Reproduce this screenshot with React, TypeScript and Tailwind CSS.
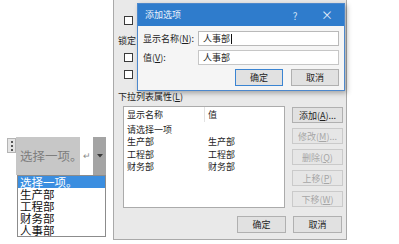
import React from "react";

const U = ({ children }: { children: React.ReactNode }) => (
  <span className="underline">{children}</span>
);

const Btn = ({
  children,
  disabled = false,
  primary = false,
  className = "",
}: {
  children: React.ReactNode;
  disabled?: boolean;
  primary?: boolean;
  className?: string;
}) => (
  <div
    className={`flex items-center justify-center border text-[9px] leading-none ${
      disabled
        ? "bg-[#e6e6e6] border-[#cacaca] text-[#a6a6a6]"
        : primary
        ? "bg-[#e1e1e1] border-[#3a84d2] text-[#1e1e1e]"
        : "bg-[#e1e1e1] border-[#b0b0b0] text-[#1e1e1e]"
    } ${className}`}
  >
    {children}
  </div>
);

const Checkbox = () => (
  <div className="w-[9px] h-[9px] border border-[#3a3a3a] bg-white shrink-0" />
);

const ContentControl = () => {
  const items = ["选择一项。", "生产部", "工程部", "财务部", "人事部"];
  return (
    <div className="absolute left-[7px] top-[137px] flex font-['Noto_Sans_CJK_SC',sans-serif]">
      {/* handle */}
      <div className="w-[9px] h-[15px] mt-[1px] border border-[#b4b4b4] bg-[#e4e4e4] flex flex-col items-center justify-center gap-[2px]">
        <span className="w-[2px] h-[2px] bg-[#555]" />
        <span className="w-[2px] h-[2px] bg-[#555]" />
        <span className="w-[2px] h-[2px] bg-[#555]" />
      </div>
      <div className="flex flex-col">
        <div className="flex h-[38px]">
          <div className="w-[64px] bg-[#c7c7c7] flex items-center pl-[4px] text-[12.5px] text-[#7e7e7e] whitespace-nowrap">
            选择一项。
          </div>
          <div className="w-[13px] bg-white flex items-center justify-center text-[9px] text-[#8a8a8a]">
            ↵
          </div>
          <div className="w-[13px] bg-[#a4a4a4] flex items-center justify-center">
            <svg width="6" height="4" viewBox="0 0 6 4">
              <path d="M0 0 L6 0 L3 3.5 Z" fill="#3a3a3a" />
            </svg>
          </div>
        </div>
        <div className="ml-[1px] w-[89px] h-[62px] border border-[#8c8c8c] bg-white flex flex-col">
          {items.map((t, i) => (
            <div
              key={t}
              className={`h-[12px] leading-[12px] text-[11.5px] pl-[2px] whitespace-nowrap ${
                i === 0 ? "bg-[#3b8ee0] text-white" : "text-[#111]"
              }`}
            >
              {t}
            </div>
          ))}
        </div>
      </div>
    </div>
  );
};

const BackDialog = () => {
  const rows = [
    ["请选择一项", ""],
    ["生产部", "生产部"],
    ["工程部", "工程部"],
    ["财务部", "财务部"],
  ];
  return (
    <div className="absolute left-[113px] top-0 w-[234px] h-[240px] bg-[#e9e9e9] border-x border-b border-[#a9a9a9] flex flex-col text-[9px] text-[#1e1e1e] font-['Noto_Sans_CJK_SC',sans-serif]">
      <div className="flex items-center pl-[10px] mt-[16px] h-[9px]">
        <Checkbox />
      </div>
      <div className="pl-[4px] mt-[10px] h-[12px] leading-[12px]">锁定</div>
      <div className="flex items-center pl-[10px] mt-[6px] h-[9px]">
        <Checkbox />
      </div>
      <div className="flex items-center pl-[10px] mt-[8px] h-[9px]">
        <Checkbox />
      </div>
      <div className="pl-[4px] mt-[12px] h-[12px] leading-[12px]">
        下拉列表属性(<U>L</U>)
      </div>
      <div className="flex mt-[3px] pl-[9px] gap-[7px]">
        <div className="w-[162px] h-[102px] border border-[#ababab] bg-white flex flex-col">
          <div className="flex h-[15px] items-center">
            <div className="w-[81px] pl-[3px] h-full flex items-center border-r border-[#e2e2e2]">
              显示名称
            </div>
            <div className="pl-[3px]">值</div>
          </div>
          <div className="flex flex-col pt-[1px]">
            {rows.map(([a, b]) => (
              <div key={a} className="flex h-[12.5px] items-center">
                <div className="w-[81px] pl-[3px]">{a}</div>
                <div className="pl-[3px]">{b}</div>
              </div>
            ))}
          </div>
        </div>
        <div className="flex flex-col gap-[5px] w-[51px] pt-[1px]">
          <Btn className="h-[16px]">
            添加(<U>A</U>)...
          </Btn>
          <Btn disabled className="h-[16px]">
            修改(<U>M</U>)...
          </Btn>
          <Btn disabled className="h-[16px]">
            删除(<U>Q</U>)
          </Btn>
          <Btn disabled className="h-[16px]">
            上移(<U>P</U>)
          </Btn>
          <Btn disabled className="h-[16px]">
            下移(<U>W</U>)
          </Btn>
        </div>
      </div>
      <div className="flex justify-end gap-[7px] pr-[4px] mt-[8px]">
        <Btn className="w-[49px] h-[17px]">确定</Btn>
        <Btn className="w-[49px] h-[17px]">取消</Btn>
      </div>
    </div>
  );
};

const AddDialog = () => (
  <div className="absolute left-[137px] top-[3px] w-[208px] h-[88px] bg-[#f5f5f5] border border-[#4d88cc] shadow-[2px_2px_5px_rgba(0,0,0,0.3)] flex flex-col text-[9px] text-[#1e1e1e] font-['Noto_Sans_CJK_SC',sans-serif]">
    <div className="h-[22px] bg-[#2f7ccc] flex items-center pl-[7px] pr-[1px] text-[#eef5fc]">
      <span>添加选项</span>
      <span className="ml-auto w-[32px] text-center text-[10px] text-[#cfe2f6]">?</span>
      <span className="w-[32px] text-center text-[12px] text-[#e3eefa]">×</span>
    </div>
    <div className="flex flex-col px-[5px] pt-[5px] gap-[4px]">
      <div className="flex items-center h-[15px]">
        <div className="w-[55px] whitespace-nowrap">
          显示名称(<U>N</U>):
        </div>
        <div className="flex-1 h-full bg-white border border-[#b9b9b9] flex items-center pl-[4px]">
          人事部
          <span className="w-px h-[10px] bg-[#111] ml-[1px]" />
        </div>
      </div>
      <div className="flex items-center h-[15px]">
        <div className="w-[55px] whitespace-nowrap">
          值(<U>V</U>):
        </div>
        <div className="flex-1 h-full bg-white border border-[#c6c6c6] flex items-center pl-[4px]">
          人事部
        </div>
      </div>
      <div className="flex justify-end gap-[8px]">
        <Btn primary className="w-[48px] h-[17px]">
          确定
        </Btn>
        <Btn className="w-[48px] h-[17px]">取消</Btn>
      </div>
    </div>
  </div>
);

export default function App() {
  return (
    <div className="relative w-[399px] h-[244px] bg-white overflow-hidden">
      <ContentControl />
      <BackDialog />
      <AddDialog />
    </div>
  );
}
